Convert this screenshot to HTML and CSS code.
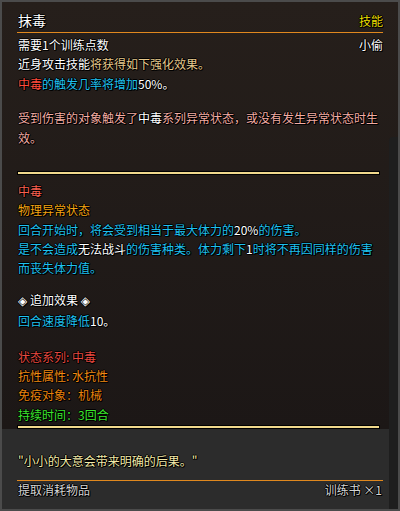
FILE: index.html
```html
<!DOCTYPE html>
<html lang="zh-CN">
<head>
<meta charset="utf-8">
<link rel="stylesheet" href="styles.css">
</head>
<body>
<div class="tooltip">
  <div class="main">
    <div class="header">
      <span class="title">抹毒</span>
      <span class="kind">技能</span>
    </div>
    <div class="sec sec-req">
      <div class="row"><span class="w">需要1个训练点数</span><span class="w">小偷</span></div>
      <p class="line"><span class="w">近身攻击技能</span><span class="gold">将获得如下强化效果。</span></p>
      <p class="line"><span class="red">中毒</span><span class="cyan">的触发几率将增加</span><span class="w">50%。</span></p>
    </div>
    <p class="sec sec-cond pink">受到伤害的对象触发了<span class="w">中毒</span>系列异常状态，或没有发生异常状态时生效。</p>
    <div class="sep"></div>
    <div class="sec sec-status">
      <p class="line salmon">中毒</p>
      <p class="line orange">物理异常状态</p>
      <p class="line cyan">回合开始时，将会受到相当于最大体力的<span class="w">20%</span>的伤害。</p>
      <p class="line cyan">是不会造成<span class="w">无法战斗</span>的伤害种类。体力剩下<span class="w">1</span>时将不再因同样的伤害而丧失体力值。</p>
    </div>
    <div class="sec sec-extra">
      <p class="line w"><span class="dia">◈</span> 追加效果 <span class="dia">◈</span></p>
      <p class="line cyan">回合速度降低<span class="w">10。</span></p>
    </div>
    <div class="sec sec-attr">
      <p class="line sred">状态系列: 中毒</p>
      <p class="line sorange">抗性属性: 水抗性</p>
      <p class="line sorange2">免疫对象：机械</p>
      <p class="line green">持续时间：3回合</p>
    </div>
    <div class="sep sep-bottom"></div>
  </div>
  <div class="footer">
    <p class="quote">"小小的大意会带来明确的后果。"</p>
    <div class="foot-row">
      <span>提取消耗物品</span>
      <span>训练书 ×1</span>
    </div>
  </div>
  <div class="scrolltrack"></div>
</div>
</body>
</html>
```

FILE: styles.css
```css
* { box-sizing: border-box; }
html, body { margin: 0; padding: 0; background: #2b2b2b; }
body {
  font-family: "Noto Sans CJK SC", "Noto Sans", "DejaVu Sans", sans-serif;
  font-size: 12px;
  line-height: 19.4px;
}
p { margin: 0; }
.tooltip {
  position: relative;
  width: 400px;
  height: 511px;
  border: 2px solid #4b4b4b;
  background: #2c2c2c;
  display: flex;
  flex-direction: column;
  overflow: hidden;
  text-shadow: 1px 0 0 #000, -1px 0 0 #000, 0 1px 0 #000, 0 -1px 0 #000, 1px 1px 0 #000;
}
.main {
  height: 427px;
  background: linear-gradient(#261f1b, #1c1716);
  padding: 0 15px 0 15px;
  display: flex;
  flex-direction: column;
}
.header {
  display: flex;
  justify-content: space-between;
  align-items: baseline;
  padding: 8px 0 1px 1px;
  line-height: 20px;
  border-bottom: 1px solid #e0881e;
}
.title { color: #fff; font-size: 14px; }
.kind { color: #ecde00; font-size: 12px; }
.sec { padding-left: 1px; }
.sec-req { padding-top: 2px; }
.row { display: flex; justify-content: space-between; }
.sec-cond { margin-top: 15px; padding-right: 2px; }
.sep {
  margin: 24px 3px 0 0;
  height: 4px;
  background: #f0d88c;
  border: 1px solid #000;
}
.sec-status { margin-top: 6px; }
.sec-extra { margin-top: 12px; }
.sec-attr { margin-top: 16px; }
.sep-bottom { margin-top: 1px; }
.footer {
  flex: 1;
  padding: 22px 15px 0 15px;
  color: #d4d4d4;
}
.quote { color: #f2e9a8; padding-left: 1px; }
.foot-row {
  margin-top: 10px;
  border-top: 1px solid #e0881e;
  display: flex;
  justify-content: space-between;
  padding: 0 1px;
  line-height: 18px;
}
.scrolltrack {
  position: absolute;
  right: 0;
  top: 135px;
  bottom: 0;
  width: 9px;
  background: #1e1e1e;
  border-top-left-radius: 4px;
}
.w { color: #ffffff; }
.gold { color: #e6c98c; }
.red { color: #ff4c3c; }
.cyan { color: #1fc0ef; }
.pink { color: #f3aca3; }
.salmon { color: #f8604f; }
.orange { color: #f2a412; }
.sred { color: #e4483f; }
.sorange { color: #f28a12; }
.sorange2 { color: #e8820c; }
.green { color: #3be62c; }
.dia { font-family: "DejaVu Sans", sans-serif; }
```
